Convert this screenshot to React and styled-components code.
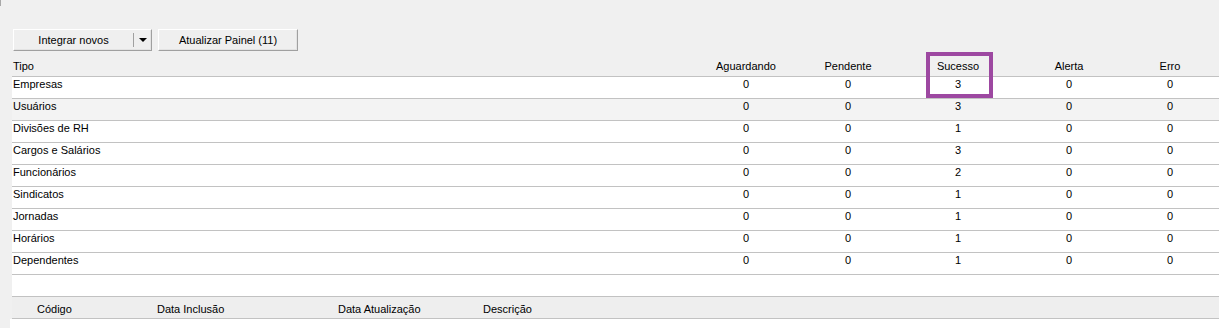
import React from 'react';
import styled, { createGlobalStyle } from 'styled-components';

const GlobalStyle = createGlobalStyle`
  html, body {
    margin: 0;
    padding: 0;
    background: #f0f0f0;
  }
  body {
    font-family: "Liberation Sans", Arial, sans-serif;
    font-size: 11px;
    color: #000;
  }
`;

const Page = styled.div`
  position: relative;
  width: 1219px;
  height: 328px;
  overflow: hidden;
  box-sizing: border-box;
  padding-top: 29px;

  &::before {
    content: '';
    position: absolute;
    left: 0;
    top: 0;
    width: 1px;
    height: 6px;
    background: #a8a8a8;
  }
`;

const Toolbar = styled.div`
  display: flex;
  gap: 6px;
  padding-left: 13px;
  height: 22px;
`;

const Button = styled.div`
  box-sizing: border-box;
  width: ${(p) => p.$width}px;
  height: 22px;
  display: flex;
  align-items: center;
  background: #efefef;
  border-top: 1px solid #ffffff;
  border-left: 1px solid #ffffff;
  border-right: 1px solid #a0a0a0;
  border-bottom: 1px solid #a0a0a0;
  box-shadow: inset -1px -1px 0 #e3e3e3;
`;

const ButtonLabel = styled.span`
  flex: 1;
  text-align: center;
  line-height: 14px;
`;

const DropPart = styled.span`
  width: 17px;
  height: 14px;
  border-left: 1px solid #a0a0a0;
  display: flex;
  align-items: center;
  justify-content: center;
`;

const Arrow = styled.span`
  width: 0;
  height: 0;
  border-left: 4px solid transparent;
  border-right: 4px solid transparent;
  border-top: 4px solid #000;
`;

const Grid = styled.div`
  position: relative;
  margin-top: 4px;
  margin-left: 12px;
`;

const Row = styled.div`
  display: grid;
  grid-template-columns: 683px 102px 102px 118px 104px 1fr;
  height: 22px;
  box-sizing: border-box;
  border-bottom: 1px solid #c2c2c2;
  background: ${(p) => (p.$head ? 'transparent' : p.$shade ? '#f3f3f3' : '#ffffff')};
  padding-top: ${(p) => (p.$head ? 4 : 0)}px;
  line-height: 14px;
`;

const Cell = styled.div`
  text-align: ${(p) => (p.$num ? 'center' : 'left')};
  padding-left: ${(p) => (p.$num ? 0 : 1)}px;
  white-space: nowrap;
`;

const Highlight = styled.div`
  position: absolute;
  left: 914px;
  top: -3px;
  width: 67px;
  height: 46px;
  box-sizing: border-box;
  border: 4px solid #9d48a1;
  pointer-events: none;
`;

const DetailHead = styled.div`
  display: grid;
  grid-template-columns: 24px 120px 181px 145px 1fr;
  height: 22px;
  box-sizing: border-box;
  border-bottom: 1px solid #c2c2c2;
  background: #eeeeee;
  padding-top: 5px;
  line-height: 14px;
`;

const DetailBody = styled.div`
  margin-left: -2px;
  height: 20px;
  background: #ffffff;
`;

const rows = [
  { tipo: 'Empresas', v: [0, 0, 3, 0, 0] },
  { tipo: 'Usuários', v: [0, 0, 3, 0, 0], shade: true },
  { tipo: 'Divisões de RH', v: [0, 0, 1, 0, 0] },
  { tipo: 'Cargos e Salários', v: [0, 0, 3, 0, 0] },
  { tipo: 'Funcionários', v: [0, 0, 2, 0, 0] },
  { tipo: 'Sindicatos', v: [0, 0, 1, 0, 0] },
  { tipo: 'Jornadas', v: [0, 0, 1, 0, 0] },
  { tipo: 'Horários', v: [0, 0, 1, 0, 0] },
  { tipo: 'Dependentes', v: [0, 0, 1, 0, 0] },
];

const heads = ['Aguardando', 'Pendente', 'Sucesso', 'Alerta', 'Erro'];

function App() {
  return (
    <Page>
      <GlobalStyle />
      <Toolbar>
        <Button $width={139}>
          <ButtonLabel>Integrar novos</ButtonLabel>
          <DropPart>
            <Arrow />
          </DropPart>
        </Button>
        <Button $width={140}>
          <ButtonLabel>Atualizar Painel (11)</ButtonLabel>
        </Button>
      </Toolbar>
      <Grid>
        <Row $head>
          <Cell>Tipo</Cell>
          {heads.map((h) => (
            <Cell $num key={h}>{h}</Cell>
          ))}
        </Row>
        {rows.map((r) => (
          <Row key={r.tipo} $shade={r.shade}>
            <Cell>{r.tipo}</Cell>
            {r.v.map((n, i) => (
              <Cell $num key={i}>{n}</Cell>
            ))}
          </Row>
        ))}
        <Row />
        <DetailHead>
          <Cell />
          <Cell>Código</Cell>
          <Cell>Data Inclusão</Cell>
          <Cell>Data Atualização</Cell>
          <Cell>Descrição</Cell>
        </DetailHead>
        <DetailBody />
        <Highlight />
      </Grid>
    </Page>
  );
}

export default App;
